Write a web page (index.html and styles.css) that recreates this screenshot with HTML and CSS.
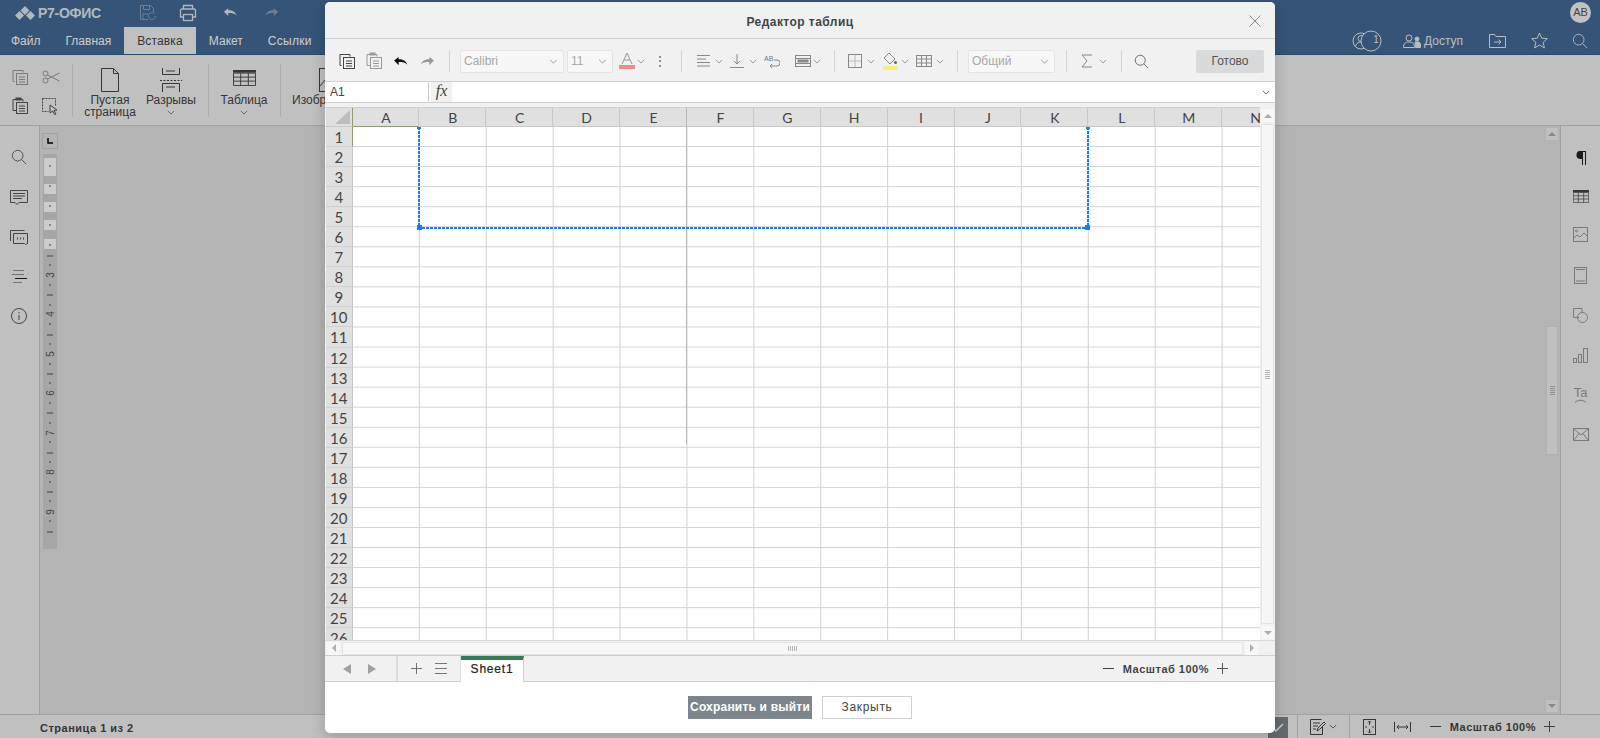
FILE: index.html
```html
<!DOCTYPE html>
<html lang="ru">
<head>
    <meta charset="UTF-8">
    <title>Редактор таблиц</title>
    <link rel="stylesheet" href="styles.css">
</head>
<body>
<svg class="defs" width="0" height="0">
    <symbol id="chev" viewBox="0 0 10 6"><path d="M1 1l4 4 4-4" fill="none" stroke="currentColor"/></symbol>
    <symbol id="search" viewBox="0 0 18 18"><circle cx="7.5" cy="7.5" r="6" fill="none" stroke="currentColor"/><path d="M12 12l5 5" stroke="currentColor" fill="none"/></symbol>
    <symbol id="copy" viewBox="0 0 18 18"><path d="M3.5 13.5h-1.500v-11h10v2" fill="none" stroke="currentColor"/><rect x="5.500" y="5.500" width="11" height="11" fill="none" stroke="currentColor"/><path d="M8 9h6M8 11.500h6M8 14h6" stroke="currentColor"/></symbol>
    <symbol id="paste" viewBox="0 0 18 18"><path d="M5 13.500h-3v-11h3M10 2.500h2v2" fill="none" stroke="currentColor"/><rect x="4.500" y="0.500" width="6" height="3" fill="currentColor"/><rect x="5.500" y="5.500" width="11" height="11" fill="none" stroke="currentColor"/><path d="M8 9h6M8 11.500h6M8 14h6" stroke="currentColor"/></symbol>
    <symbol id="undo" viewBox="0 0 16 12"><path d="M1 5l5-4v2.500c4.500 0 8 1.500 9.500 6-2-2.500-5-3-9.500-3V10z" fill="currentColor"/></symbol>
    <symbol id="redo" viewBox="0 0 16 12"><path d="M15 5l-5-4v2.500c-4.500 0-8 1.500-9.500 6 2-2.500 5-3 9.500-3V10z" fill="currentColor"/></symbol>
    <symbol id="plus" viewBox="0 0 12 12"><path d="M6 0v12M0 6h12" stroke="currentColor" fill="none"/></symbol>
    <symbol id="table" viewBox="0 0 24 18"><path d="M.500 3.500h23v14h-23zM.500 8h23M.500 12.500h23M8 3.500v14M16 3.500v14" fill="none" stroke="currentColor"/><rect width="24" height="3" fill="currentColor"/></symbol>
</svg>

<div class="app">
    <header class="title-row">
        <div class="logo">
            <svg width="22" height="14" viewBox="0 0 22 14"><path d="M11 0l4.500 4.500L11 9 6.500 4.500zM5.500 5l4.500 4.500L5.500 14 1 9.500zM16.500 5l4.500 4.500-4.500 4.500-4.500-4.500z" fill="currentColor"/></svg>
            <span>Р7-ОФИС</span>
        </div>
        <svg class="top-save" width="18" height="18" viewBox="0 0 18 18" fill="none" stroke="currentColor"><path d="M9 15.500H1.500v-14h10l3 3V8"/><path d="M4.500 1.500v4h6v-4M4 15v-5h5"/><path d="M16.500 12a3.500 3.500 0 1 1-1-2.400" /></svg>
        <svg class="top-print" width="18" height="18" viewBox="0 0 18 18"><path d="M4.500 5V1.500h9V5M4.500 13h-3V6.500a1.500 1.500 0 0 1 1.500-1.500h12a1.500 1.500 0 0 1 1.500 1.500V13h-3" fill="none" stroke="currentColor" stroke-width="1.300"/><rect x="4.500" y="10.500" width="9" height="6" fill="none" stroke="currentColor" stroke-width="1.300"/></svg>
        <svg class="top-undo" width="14" height="11"><use href="#undo"/></svg>
        <svg class="top-redo" width="14" height="11"><use href="#redo"/></svg>
        <div class="avatar">АВ</div>
    </header>

    <nav class="tab-row">
        <div class="tab first">Файл</div>
        <div class="tab">Главная</div>
        <div class="tab active">Вставка</div>
        <div class="tab">Макет</div>
        <div class="tab wide">Ссылки</div>
        <div class="tab-right">
            <div class="users">
                <svg width="30" height="22" viewBox="0 0 30 22" fill="none" stroke="currentColor"><circle cx="9" cy="11" r="8"/><circle cx="9" cy="8.500" r="3"/><path d="M3.500 16c1-3 3-4 5.500-4"/><circle cx="19" cy="11" r="10" fill="#446995"/></svg>
                <span class="users-count">1</span>
            </div>
            <svg class="share-icon" width="18" height="14" viewBox="0 0 18 14" fill="none" stroke="currentColor"><circle cx="6" cy="4" r="3"/><path d="M.500 13.500c0-4 2-5.500 5.500-5.500s5.500 1.500 5.500 5.500z"/><circle cx="14" cy="5" r="2" fill="currentColor"/><path d="M12 8h4l1.500 2v3.500h-5z" fill="currentColor"/></svg>
            <span class="share-label">Доступ</span>
            <svg class="folder-icon" width="17" height="14" viewBox="0 0 17 14" fill="none" stroke="currentColor"><path d="M.500 13V.500h5l1.500 2h9.500V13.500H.500z"/><path d="M5 8h7M9.500 5.500L12 8l-2.500 2.500"/></svg>
            <svg class="star-icon" width="17" height="17" viewBox="0 0 17 17" fill="none" stroke="currentColor"><path d="M8.500 1l2.200 5.200 5.600.5-4.200 3.700 1.300 5.500-4.900-2.900-4.900 2.900 1.300-5.500L.700 6.700l5.600-.5z"/></svg>
            <svg class="find-icon" width="16" height="16"><use href="#search"/></svg>
        </div>
    </nav>

    <section class="ribbon">
        <div class="small-tools">
            <svg width="18" height="18"><use href="#copy"/></svg>
            <svg width="18" height="14" viewBox="0 0 18 14" fill="none" stroke="currentColor"><circle cx="3.500" cy="3.500" r="2.500"/><circle cx="3.500" cy="10.500" r="2.500"/><path d="M5.500 5l12 6M5.500 9l12-6"/></svg>
            <svg width="18" height="18"><use href="#paste"/></svg>
            <svg width="17" height="17" viewBox="0 0 17 17" fill="none" stroke="currentColor"><path d="M.500.500h13v7M.500.500v13h6" stroke-dasharray="2 1"/><path d="M8 7l7 5-3 .5 2 3.500-1.500.5-2-3.500-2.500 2z"/></svg>
        </div>
        <div class="ribbon-sep s6"></div>
        <div class="big-tool w60 m7">
            <svg width="18" height="24" viewBox="0 0 18 24" fill="none" stroke="currentColor"><path d="M.500.500h12l5 5v18H.500zM12.500.500v5h5"/></svg>
            <div class="big-label">Пустая<br>страница</div>
        </div>
        <div class="big-tool w58 m2">
            <svg width="22" height="24" viewBox="0 0 22 24" fill="none" stroke="currentColor"><path d="M2.500 0v6.500h17V0M6 3h9"/><path d="M0 12.500h22" stroke-dasharray="2 1.500"/><path d="M2.500 24v-8.500h17V24M6 19h9"/></svg>
            <div class="big-label">Разрывы</div>
            <svg class="big-chev" width="8" height="5"><use href="#chev"/></svg>
        </div>
        <div class="ribbon-sep s8"></div>
        <div class="big-tool w56 m7">
            <svg class="ribbon-table" width="23" height="16" viewBox="0 0 24 18" preserveAspectRatio="none"><use href="#table"/></svg>
            <div class="big-label">Таблица</div>
            <svg class="big-chev" width="8" height="5"><use href="#chev"/></svg>
        </div>
        <div class="ribbon-sep s8"></div>
        <div class="big-tool m11">
            <svg width="22" height="24" viewBox="0 0 22 24" fill="none" stroke="currentColor"><rect x=".500" y=".500" width="21" height="23"/><path d="M1 18l6-7 5 5 3-3 6 6"/></svg>
            <div class="big-label">Изображение</div>
        </div>
    </section>

    <main class="workspace">
        <aside class="left-panel">
            <svg width="16" height="16"><use href="#search"/></svg>
            <svg width="18" height="16" viewBox="0 0 18 16" fill="none" stroke="currentColor"><path d="M.500.500h17v12H9l-2 2-2-2H.500z"/><path d="M3 3.500h12M3 6h12M3 8.500h9"/></svg>
            <svg width="18" height="16" viewBox="0 0 18 16" fill="none" stroke="currentColor"><path d="M.500 11V.500h14"/><path d="M3.500 3.500h14v10l-2 1-1-1H3.500z"/><path d="M7 8.500h1M10 8.500h1M13 8.500h1" stroke-width="2"/></svg>
            <svg width="16" height="14" viewBox="0 0 16 14" stroke="currentColor"><path d="M2 .500h11M1 4.500h12" opacity=".6"/><path d="M4 8.500h12" stroke="#222"/><path d="M2 12.500h9" opacity=".6"/></svg>
            <svg width="16" height="16" viewBox="0 0 16 16" fill="none" stroke="currentColor"><circle cx="8" cy="8" r="7.500"/><path d="M8 7v5M8 4v1.500"/></svg>
        </aside>
        <div class="doc-area">
            <div class="ruler-col">
                <div class="tab-stop"><svg width="6" height="6" viewBox="0 0 6 6"><path d="M1 0v5h5" fill="none" stroke="#000" stroke-width="1.500"/></svg></div>
                <svg class="ruler" width="16" height="395" viewBox="0 0 16 395">
                    <rect x="1" width="14" height="395" fill="#d0d0d0"/>
                    <path d="M2 4h12v18H2zM2 30h12v10H2zM2 48h12v10H2zM2 66h12v10H2zM2 85h12v10H2z" fill="#fff"/>
                    <path d="M7 12h2M7 32h2M7 52h2M7 71h2M7 91h2M7 111h2M7 131h2M7 151h2M7 170h2M7 190h2M7 210h2M7 229h2M7 249h2M7 269h2M7 288h2M7 308h2M7 328h2M7 347h2M7 367h2" stroke="#555" fill="none"/>
                    <path d="M5 102h6M5 141h6M5 181h6M5 220h6M5 259h6M5 299h6M5 338h6M5 378h6" stroke="#555" fill="none"/>
                    <g class="ruler-nums">
                        <text transform="translate(12 121) rotate(-90)">3</text>
                        <text transform="translate(12 160) rotate(-90)">4</text>
                        <text transform="translate(12 200) rotate(-90)">5</text>
                        <text transform="translate(12 239) rotate(-90)">6</text>
                        <text transform="translate(12 279) rotate(-90)">7</text>
                        <text transform="translate(12 318) rotate(-90)">8</text>
                        <text transform="translate(12 358) rotate(-90)">9</text>
                    </g>
                </svg>
            </div>
            <div class="doc-scroll">
                <div class="scroll-btn"><i class="tri up"></i></div>
                <div class="doc-thumb"><span class="grip-h"></span></div>
                <div class="scroll-btn last"><i class="tri down"></i></div>
            </div>
        </div>
        <aside class="right-panel">
            <svg width="12" height="14" viewBox="0 0 12 14"><path d="M6 0H11V14H10V1H8V14H7V8H5A4 4 0 0 1 6 0z" fill="#222"/></svg>
            <svg class="panel-dark" width="16" height="13" viewBox="0 0 24 18" preserveAspectRatio="none"><use href="#table"/></svg>
            <svg width="15" height="15" viewBox="0 0 15 15" fill="none" stroke="currentColor"><rect x=".500" y=".500" width="14" height="14"/><circle cx="3.500" cy="4" r="1"/><path d="M1 11l3-3 3 2 4-4 3 3"/></svg>
            <svg width="13" height="17" viewBox="0 0 13 17" fill="none" stroke="currentColor"><rect x=".500" y=".500" width="12" height="16"/><path d="M2 2.500h9M2 14h9"/></svg>
            <svg width="15" height="15" viewBox="0 0 15 15" fill="none" stroke="currentColor"><path d="M6 9.500H.500V.500H9V5"/><circle cx="9.500" cy="9.500" r="5"/></svg>
            <svg width="15" height="15" viewBox="0 0 15 15" fill="none" stroke="currentColor"><rect x=".500" y="10.500" width="3" height="4"/><rect x="5.500" y="6.500" width="3" height="8"/><rect x="10.500" y=".500" width="4" height="14"/></svg>
            <div class="panel-ta">
                <span>Ta</span>
                <svg width="11" height="4" viewBox="0 0 11 4"><path d="M0 3.500C3 .500 8 .500 11 3.500" fill="none" stroke="currentColor"/></svg>
            </div>
            <svg width="16" height="13" viewBox="0 0 16 13" fill="none" stroke="currentColor"><rect x=".500" y=".500" width="15" height="12"/><path d="M1 1l7 6 7-6M1 12l5-6.500M15 12l-5-6.500"/></svg>
        </aside>
    </main>

    <footer class="status-bar">
        <div class="page-count">Страница 1 из 2</div>
        <div class="status-right">
            <div class="review-box">
                <svg width="12" height="10" viewBox="0 0 12 10"><path d="M1 5l3 3 7-7" fill="none" stroke="#fff" stroke-width="1.500"/></svg>
            </div>
            <div class="status-sep s9"></div>
            <svg class="status-edit" width="16" height="16" viewBox="0 0 16 16" fill="none" stroke="currentColor"><path d="M12.500 8v7.500H.500V.500h11"/><path d="M3 4h7M3 7h5M3 10h3M7 12l1-3 6-6 1.500 1.500-6 6z"/></svg>
            <svg class="status-chev" width="8" height="5"><use href="#chev"/></svg>
            <div class="status-sep s12"></div>
            <svg class="status-fit" width="13" height="16" viewBox="0 0 13 16" fill="none" stroke="currentColor"><rect x=".500" y=".500" width="12" height="15"/><path d="M6.500 2v4M5 3.500L6.500 2 8 3.500M6.500 14v-4M5 12.500L6.500 14 8 12.500M2 8h2M9 8h2"/></svg>
            <svg class="status-width" width="17" height="10" viewBox="0 0 17 10" fill="none" stroke="currentColor"><path d="M.500 0v10M16.500 0v10M3 5h11M5 3L3 5l2 2M12 3l2 2-2 2"/></svg>
            <span class="zoom-minus"></span>
            <span class="zoom-label">Масштаб 100%</span>
            <svg class="zoom-plus" width="11" height="11"><use href="#plus"/></svg>
        </div>
    </footer>
</div>

<div class="overlay"></div>

<div class="modal">
    <div class="modal-title">
        <span>Редактор таблиц</span>
        <svg class="modal-close" width="12" height="12" viewBox="0 0 12 12"><path d="M.500.500l11 11M11.500.500l-11 11" stroke="#888" fill="none"/></svg>
    </div>

    <div class="sheet-tools">
        <span class="ic27"><svg width="18" height="18"><use href="#copy"/></svg></span>
        <span class="ic27 faded"><svg width="18" height="18"><use href="#paste"/></svg></span>
        <span class="ic27 black"><svg width="15" height="11"><use href="#undo"/></svg></span>
        <span class="ic27 faded"><svg width="15" height="11"><use href="#redo"/></svg></span>
        <div class="tool-sep m8"></div>
        <div class="combo font-combo m10"><span>Calibri</span><svg width="9" height="5"><use href="#chev"/></svg></div>
        <div class="combo size-combo m3"><span>11</span><svg width="9" height="5"><use href="#chev"/></svg></div>
        <span class="ic m5"><svg class="tool-a" width="16" height="18" viewBox="0 0 16 18"><path d="M3 12L8 1l5 11M5 8h6" fill="none" stroke="#999"/><rect x="0" y="13" width="16" height="4" fill="#f08a8a"/></svg></span>
        <span class="ch"><svg width="8" height="5"><use href="#chev"/></svg></span>
        <span class="ch m9 dots">⋮</span>
        <div class="tool-sep m16"></div>

        <span class="ic m13"><svg width="14" height="12" viewBox="0 0 14 12"><path d="M0 .500h13M0 4h9M0 7.500h13M0 11h13" stroke="#888"/></svg></span>
        <span class="ch m1"><svg width="8" height="5"><use href="#chev"/></svg></span>
        <span class="ic m4"><svg width="14" height="14" viewBox="0 0 14 14" fill="none" stroke="#888"><path d="M7 0v10M4 7l3 3 3-3M0 13.500h14"/></svg></span>
        <span class="ch m2"><svg width="8" height="5"><use href="#chev"/></svg></span>
        <span class="ic m5"><svg width="16" height="13" viewBox="0 0 16 13"><text class="wrap-ab" x="0" y="6">AB</text><path d="M10 5h3a2.500 2.500 0 0 1 0 6H6M8 9l-2 2 2 2" fill="none" stroke="#888"/></svg></span>
        <span class="ic m13"><svg width="16" height="12" viewBox="0 0 16 12" fill="none" stroke="#888"><rect x=".500" y=".500" width="15" height="11"/><path d="M1 3.500h14M1 8.500h14"/><rect x="3" y="5" width="10" height="2" fill="#888"/></svg></span>
        <span class="ch"><svg width="8" height="5"><use href="#chev"/></svg></span>
        <div class="tool-sep m12"></div>

        <span class="ic m11"><svg width="14" height="14" viewBox="0 0 14 14" fill="none" stroke="#888"><rect x=".500" y=".500" width="13" height="13"/><path d="M7 1v12M1 7h12" stroke="#bbb"/></svg></span>
        <span class="ch m2"><svg width="8" height="5"><use href="#chev"/></svg></span>
        <span class="ic m5"><svg width="15" height="18" viewBox="0 0 15 18"><path d="M6 1l6 6-5 5-6-6z" fill="none" stroke="#888"/><circle cx="12.500" cy="10.500" r="1.500" fill="#666"/><rect y="14" width="15" height="4" fill="#f4f07a"/></svg></span>
        <span class="ch m1"><svg width="8" height="5"><use href="#chev"/></svg></span>
        <span class="ic m5"><svg width="16" height="12" viewBox="0 0 16 12" fill="none" stroke="#888"><rect x=".500" y=".500" width="15" height="11"/><path d="M1 4h14M1 8h14M5.500 1v10M10.500 1v10"/></svg></span>
        <span class="ch m2"><svg width="8" height="5"><use href="#chev"/></svg></span>
        <div class="tool-sep m12"></div>

        <div class="combo format-combo m10"><span>Общий</span><svg width="9" height="5"><use href="#chev"/></svg></div>
        <div class="tool-sep m11"></div>

        <span class="ic m11"><svg width="12" height="14" viewBox="0 0 12 14"><path d="M11 1H1l5 6-5 6h10" fill="none" stroke="#888"/></svg></span>
        <span class="ch m2"><svg width="8" height="5"><use href="#chev"/></svg></span>
        <div class="tool-sep m13"></div>
        <span class="ic m10 ic-dark"><svg width="15" height="15"><use href="#search"/></svg></span>
        <div class="done-btn">Готово</div>
    </div>

    <div class="formula-bar">
        <div class="name-box">A1</div>
        <div class="fx-box">fx</div>
        <div class="formula-input"><svg width="8" height="5"><use href="#chev"/></svg></div>
    </div>
    <div class="bar-gap"></div>

    <div class="sheet-view">
        <div class="sheet-main">
            <div class="col-head">
                <div class="corner"><svg width="15" height="14"><path d="M15 0v14H0z" fill="#bdbdbd"/></svg></div>
                <div class="col active">A</div><div class="col">B</div><div class="col">C</div><div class="col">D</div><div class="col">E</div><div class="col">F</div><div class="col">G</div><div class="col">H</div><div class="col">I</div><div class="col">J</div><div class="col">K</div><div class="col">L</div><div class="col">M</div><div class="col">N</div>
            </div>
            <div class="sheet-rows">
                <div class="row-head">
                    <div class="rn active">1</div><div class="rn">2</div><div class="rn">3</div><div class="rn">4</div><div class="rn">5</div><div class="rn">6</div><div class="rn">7</div><div class="rn">8</div><div class="rn">9</div><div class="rn">10</div><div class="rn">11</div><div class="rn">12</div><div class="rn">13</div>
                    <div class="rn">14</div><div class="rn">15</div><div class="rn">16</div><div class="rn">17</div><div class="rn">18</div><div class="rn">19</div><div class="rn">20</div><div class="rn">21</div><div class="rn">22</div><div class="rn">23</div><div class="rn">24</div><div class="rn">25</div><div class="rn">26</div>
                </div>
                <div class="cells"></div>
            </div>
            <div class="freeze-line"></div>
            <div class="selection">
                <i class="sel-cap left"></i><i class="sel-cap right"></i>
                <i class="sel-dot left"></i><i class="sel-dot right"></i>
            </div>
        </div>
        <div class="v-scroll">
            <div class="sheet-btn"><i class="tri up"></i></div>
            <div class="v-thumb"><span class="grip-h"></span></div>
            <div class="sheet-btn"><i class="tri down"></i></div>
        </div>
    </div>

    <div class="h-scroll">
        <div class="sheet-btn"><i class="tri left"></i></div>
        <div class="h-thumb"><span class="grip-v"></span></div>
        <div class="sheet-btn"><i class="tri right"></i></div>
    </div>

    <div class="sheet-tabs">
        <div class="tab-nav">
            <i class="nav-tri back"></i>
            <i class="nav-tri fwd"></i>
        </div>
        <div class="tab-add">
            <svg width="11" height="11"><use href="#plus"/></svg>
            <svg width="12" height="11" viewBox="0 0 12 11"><path d="M0 .500h12M0 5.500h12M0 10.500h12" stroke="#777"/></svg>
        </div>
        <div class="sheet-tab">Sheet1</div>
        <div class="sheet-zoom">
            <span class="zoom-minus"></span>
            <span class="zoom-label">Масштаб 100%</span>
            <svg class="zoom-plus" width="11" height="11"><use href="#plus"/></svg>
        </div>
    </div>

    <div class="modal-foot">
        <div class="save-btn">Сохранить и выйти</div>
        <div class="close-btn">Закрыть</div>
    </div>
</div>
</body>
</html>
```

FILE: styles.css
```css
html, body {
    margin: 0;
    height: 100%;
    overflow: hidden;
}

body {
    font-family: "Liberation Sans", Arial, sans-serif;
    font-size: 12px;
    color: #444;
    position: relative;
}

svg {
    display: block;
    flex: none;
}

.defs {
    position: absolute;
}

.app {
    height: 738px;
    display: flex;
    flex-direction: column;
    background-color: #f1f1f1;
}

/* Top blue header */
.title-row {
    height: 27px;
    box-sizing: border-box;
    padding-bottom: 2px;
    display: flex;
    align-items: center;
    background-color: #446995;
    color: #dfe6ee;
}

.logo {
    display: flex;
    align-items: center;
    gap: 2px;
    margin-left: 14px;
    width: 86px;
    font-size: 14px;
    font-weight: bold;
    letter-spacing: -0.3px;
    white-space: nowrap;
}

.top-save {
    margin-left: 39px;
    opacity: 0.45;
}

.top-print {
    margin-left: 22px;
}

.top-undo {
    margin-left: 26px;
}

.top-redo {
    margin-left: 28px;
    opacity: 0.45;
}

.avatar {
    margin-left: auto;
    margin-right: 9px;
    width: 21px;
    height: 21px;
    border-radius: 50%;
    background-color: #f3f3f3;
    color: #555;
    font-size: 11px;
    line-height: 21px;
    text-align: center;
}

.tab-row {
    height: 28px;
    box-sizing: border-box;
    display: flex;
    background-color: #446995;
    color: #fff;
    border-bottom: 1px solid #2e5a8c;
}

.tab {
    height: 27px;
    line-height: 29px;
    padding: 0 12.5px;
    box-sizing: border-box;
}

.tab.first {
    padding-left: 11px;
}

.tab.active {
    background-color: #f1f1f1;
    color: #444;
    padding: 0 13.5px;
    letter-spacing: 0.15px;
}

.tab.wide {
    letter-spacing: 0.3px;
}

.tab-right {
    margin-left: auto;
    display: flex;
    align-items: center;
    color: #e6ebf1;
}

.users {
    position: relative;
    margin-right: 21px;
}

.users-count {
    position: absolute;
    left: 18px;
    top: 4px;
    width: 12px;
    text-align: center;
    font-size: 10px;
}

.share-label {
    margin-left: 3px;
    width: 42px;
}

.folder-icon {
    margin-left: 23px;
}

.star-icon {
    margin-left: 25px;
}

.find-icon {
    margin-left: 24px;
    margin-right: 12px;
}

/* Ribbon */
.ribbon {
    height: 71px;
    box-sizing: border-box;
    display: flex;
    align-items: flex-start;
    padding-top: 9px;
    border-bottom: 1px solid #cbcbcb;
    overflow: hidden;
}

.small-tools {
    width: 62px;
    margin-left: 4px;
    display: grid;
    grid-template-columns: 31px 31px;
    grid-auto-rows: 26px;
    row-gap: 3px;
    justify-items: center;
    align-items: center;
    color: #999;
}

.small-tools svg:nth-child(3),
.small-tools svg:nth-child(4) {
    color: #555;
}

.ribbon-sep {
    width: 1px;
    height: 53px;
    background-color: #d8d8d8;
    flex: none;
}

.s6 {
    margin-left: 6px;
}

.s8 {
    margin-left: 8px;
}

.big-tool {
    display: flex;
    flex-direction: column;
    align-items: center;
    flex: none;
}

.big-tool > svg:first-child {
    margin-top: 4px;
    margin-bottom: 2px;
}

.big-tool > svg.ribbon-table {
    margin-top: 6px;
    margin-bottom: 8px;
}

.big-label {
    line-height: 12px;
    text-align: center;
}

.big-chev {
    margin-top: 4px;
    color: #666;
}

.w60 { width: 60px; }
.w58 { width: 58px; }
.w56 { width: 56px; }

.m1 { margin-left: 1px; }
.m2 { margin-left: 2px; }
.m3 { margin-left: 3px; }
.m4 { margin-left: 4px; }
.m5 { margin-left: 5px; }
.m7 { margin-left: 7px; }
.m8 { margin-left: 8px; }
.m9 { margin-left: 9px; }
.m10 { margin-left: 10px; }
.m11 { margin-left: 11px; }
.m12 { margin-left: 12px; }
.m13 { margin-left: 13px; }
.m16 { margin-left: 16px; }

/* Document area */
.workspace {
    flex: 1;
    display: flex;
    min-height: 0;
}

.left-panel {
    width: 40px;
    box-sizing: border-box;
    border-right: 1px solid #cbcbcb;
    padding-top: 23px;
    display: flex;
    flex-direction: column;
    align-items: center;
    flex: none;
    padding-right: 2px;
    color: #555;
}

.left-panel svg {
    margin-bottom: 24px;
}

.left-panel svg:nth-child(1) {
    margin-bottom: 25px;
}

.doc-area {
    flex: 1;
    display: flex;
    justify-content: space-between;
    background-color: #e2e2e2;
}

.ruler-col {
    padding: 7px 0 0 2px;
}

.tab-stop {
    width: 14px;
    height: 14px;
    border: 1px solid #cbcbcb;
    display: flex;
    align-items: center;
    justify-content: center;
    margin-bottom: 5px;
}

.ruler-nums text {
    font-family: "Liberation Sans", Arial, sans-serif;
    font-size: 10px;
    fill: #555;
    text-anchor: middle;
}

.doc-scroll {
    width: 12px;
    margin-right: 2px;
    padding: 2px 0;
    display: flex;
    flex-direction: column;
}

.scroll-btn {
    height: 12px;
    background-color: #f1f1f1;
    display: flex;
    align-items: center;
    justify-content: center;
    flex: none;
}

.scroll-btn.last {
    margin-top: auto;
}

.doc-thumb {
    height: 129px;
    margin-top: 186px;
    box-sizing: border-box;
    background-color: #f1f1f1;
    border: 1px solid #dcdcdc;
    display: flex;
    align-items: center;
    justify-content: center;
}

.tri {
    display: block;
    width: 0;
    height: 0;
    border: 4px solid transparent;
}

.tri.up {
    border-top: 0;
    border-bottom-color: #adadad;
}

.tri.down {
    border-bottom: 0;
    border-top-color: #adadad;
}

.tri.left {
    border-left: 0;
    border-right-color: #adadad;
}

.tri.right {
    border-right: 0;
    border-left-color: #adadad;
}

.grip-h {
    width: 5px;
    height: 9px;
    background: repeating-linear-gradient(to bottom, #b5b5b5 0, #b5b5b5 1px, transparent 1px, transparent 2px);
}

.grip-v {
    width: 9px;
    height: 5px;
    background: repeating-linear-gradient(to right, #b5b5b5 0, #b5b5b5 1px, transparent 1px, transparent 2px);
}

.right-panel {
    width: 40px;
    box-sizing: border-box;
    border-left: 1px solid #cbcbcb;
    padding-top: 25px;
    display: flex;
    flex-direction: column;
    align-items: center;
    flex: none;
    gap: 24.500px;
    color: #999;
}

.panel-dark {
    color: #444;
}

.panel-ta {
    display: flex;
    flex-direction: column;
    align-items: center;
    font-size: 13px;
    line-height: 12px;
    height: 16px;
    color: #999;
}

/* Status bar */
.status-bar {
    height: 24px;
    box-sizing: border-box;
    border-top: 1px solid #cbcbcb;
    display: flex;
    align-items: flex-start;
    flex: none;
}

.page-count {
    margin-left: 40px;
    margin-top: 7px;
    font-size: 11px;
    font-weight: bold;
    letter-spacing: 0.5px;
    color: #444;
}

.status-right {
    margin-left: auto;
    display: flex;
    align-items: center;
    height: 23px;
}

.review-box {
    width: 20px;
    height: 21px;
    margin-top: 2px;
    background-color: #7d858c;
    display: flex;
    align-items: center;
    justify-content: center;
}

.status-sep {
    width: 1px;
    height: 23px;
    background-color: #cbcbcb;
}

.s9 { margin-left: 9px; }
.s12 { margin-left: 12px; }

.status-edit {
    margin-left: 12px;
}

.status-chev {
    margin-left: 3px;
}

.status-fit {
    margin-left: 13px;
}

.status-width {
    margin-left: 18px;
}

.status-right .zoom-minus {
    margin-left: 19px;
}

.status-right .zoom-plus {
    margin-right: 45px;
}

.zoom-minus {
    width: 11px;
    height: 1px;
    background-color: #444;
}

.zoom-label {
    margin-left: 9px;
    margin-right: 8px;
    font-size: 11px;
    font-weight: bold;
    letter-spacing: 0.5px;
    white-space: nowrap;
}

.overlay {
    position: absolute;
    inset: 0;
    background-color: rgba(0, 0, 0, 0.2);
}

/* Modal with spreadsheet */
.modal {
    position: absolute;
    left: 325px;
    top: 2px;
    width: 950px;
    height: 731px;
    border-radius: 5px;
    overflow: hidden;
    background-color: #fff;
    box-shadow: 0 5px 15px rgba(0, 0, 0, 0.2);
    display: flex;
    flex-direction: column;
}

.modal-title {
    height: 37px;
    box-sizing: border-box;
    flex: none;
    padding-top: 4px;
    background-color: #f1f1f1;
    border-bottom: 1px solid #cfcfcf;
    display: flex;
    align-items: center;
    justify-content: center;
    position: relative;
    font-weight: bold;
    letter-spacing: 0.45px;
    color: #444;
}

.modal-close {
    position: absolute;
    right: 14px;
    top: 13px;
}

.sheet-tools {
    height: 43px;
    box-sizing: border-box;
    flex: none;
    background-color: #f1f1f1;
    border-bottom: 1px solid #cfcfcf;
    padding-left: 8px;
    padding-top: 2px;
    display: flex;
    align-items: center;
    color: #777;
}

.sheet-tools svg {
    color: #888;
}

.ic27 {
    width: 27px;
    display: flex;
    justify-content: center;
    flex: none;
}

.ic27 svg {
    color: #444;
}

.ic27.faded svg {
    color: #999;
}

.ic27.black svg {
    color: #111;
}

.ic {
    width: 18px;
    display: flex;
    justify-content: center;
    flex: none;
}

.ic.ic-dark svg {
    color: #555;
}

.ch {
    width: 10px;
    display: flex;
    justify-content: center;
    flex: none;
}

.dots {
    color: #777;
    font-size: 14px;
    line-height: 14px;
}

.tool-sep {
    width: 1px;
    height: 22px;
    background-color: #d4d4d4;
    flex: none;
}

.combo {
    height: 23px;
    box-sizing: border-box;
    background-color: #f7f7f7;
    border: 1px solid #e4e4e4;
    border-radius: 2px;
    padding: 0 5px 0 3px;
    display: flex;
    align-items: center;
    justify-content: space-between;
    color: #a8a8a8;
    flex: none;
}

.font-combo { width: 104px; }
.size-combo { width: 46px; }
.format-combo { width: 87px; }

.wrap-ab {
    font-family: "Liberation Sans", Arial, sans-serif;
    font-size: 7px;
    fill: #777;
}

.done-btn {
    margin-left: auto;
    margin-right: 11px;
    width: 68px;
    height: 23px;
    line-height: 23px;
    text-align: center;
    background-color: #d8dadc;
    border-radius: 2px;
    color: #555;
}

.formula-bar {
    height: 21px;
    box-sizing: border-box;
    flex: none;
    display: flex;
    border-bottom: 1px solid #cfcfcf;
}

.name-box {
    width: 104px;
    box-sizing: border-box;
    padding-left: 5px;
    line-height: 20px;
    color: #444;
    border-right: 1px solid #cfcfcf;
}

.fx-box {
    width: 21px;
    margin-left: 2px;
    background-color: #f1f1f1;
    font-family: "Liberation Serif", serif;
    font-style: italic;
    font-size: 16px;
    line-height: 18px;
    text-align: center;
}

.formula-input {
    flex: 1;
    display: flex;
    align-items: center;
    justify-content: flex-end;
    padding-right: 5px;
}

.bar-gap {
    height: 4px;
    flex: none;
    background-color: #f1f1f1;
}

.sheet-view {
    height: 533px;
    flex: none;
    display: flex;
    background-color: #f1f1f1;
}

.sheet-main {
    position: relative;
    flex: 1;
    min-width: 0;
    overflow: hidden;
    background-color: #fff;
}

.col-head {
    height: 20px;
    box-sizing: border-box;
    display: flex;
    background-color: #e0e0e0;
    border-top: 1px solid #d0d0d0;
    font-family: Lato, sans-serif;
    font-size: 14px;
    color: #444;
}

.corner {
    width: 27.5px;
    box-sizing: border-box;
    flex: none;
    display: flex;
    align-items: flex-end;
    justify-content: flex-end;
    padding: 0 2px 2px 0;
    border-left: 1px solid #f1f1f1;
    border-right: 1px solid #8f9a75;
    border-bottom: 1px solid #c8c8c8;
}

.col {
    width: 66.9px;
    box-sizing: border-box;
    flex: none;
    padding-left: 1px;
    text-align: center;
    line-height: 19px;
    border-right: 1px solid #c8c8c8;
    border-bottom: 1px solid #c8c8c8;
}

.col.active {
    border-bottom-color: #8f9a75;
}

.sheet-rows {
    display: flex;
    height: 513px;
}

.row-head {
    width: 27.5px;
    flex: none;
    box-sizing: border-box;
    border-left: 1px solid #f1f1f1;
    background-color: #e0e0e0;
    font-family: Lato, sans-serif;
    font-size: 15px;
    color: #444;
}

.rn {
    height: 20.05px;
    box-sizing: border-box;
    line-height: 20px;
    text-align: center;
    border-right: 1px solid #c8c8c8;
    border-bottom: 1px solid #d0d0d0;
}

.rn.active {
    border-right-color: #8f9a75;
}

.cells {
    flex: 1;
    background-image:
        linear-gradient(to left, #d2d2d2 1px, transparent 1px),
        linear-gradient(to top, #d2d2d2 1px, transparent 1px);
    background-size: 66.9px 100%, 100% 20.05px;
}

.freeze-line {
    position: absolute;
    left: 361px;
    top: 0;
    width: 1px;
    height: 337px;
    background-color: #b8b8b8;
}

/* dashed range: 3px dash, 1px gap, top edge stays open */
.selection {
    position: absolute;
    left: 93px;
    top: 20px;
    width: 671px;
    height: 102px;
    background:
        repeating-linear-gradient(to bottom, #1a7cf5 0, #1a7cf5 3px, transparent 3px, transparent 4px) left top / 2px 100% no-repeat,
        repeating-linear-gradient(to bottom, #1a7cf5 0, #1a7cf5 3px, transparent 3px, transparent 4px) right top / 2px 100% no-repeat,
        repeating-linear-gradient(to right, #1a7cf5 0, #1a7cf5 3px, transparent 3px, transparent 4px) left bottom / 100% 2px no-repeat;
}

.sel-cap,
.sel-dot {
    position: absolute;
    background-color: #1a7cf5;
}

.sel-cap {
    top: 0;
    width: 4px;
    height: 2px;
}

.sel-cap.left { left: -1px; }
.sel-cap.right { right: -1px; }

.sel-dot {
    bottom: -1px;
    width: 5px;
    height: 5px;
}

.sel-dot.left { left: -1px; }
.sel-dot.right { right: -1px; }

.v-scroll {
    width: 15px;
    flex: none;
    display: flex;
    flex-direction: column;
    gap: 2px;
    padding: 2px 1px 1px 1px;
    box-sizing: border-box;
}

.sheet-btn {
    width: 13px;
    height: 13px;
    flex: none;
    background-color: #f7f7f7;
    border: 0;
    display: flex;
    align-items: center;
    justify-content: center;
}

.v-thumb {
    flex: 1;
    background-color: #f7f7f7;
    border: 1px solid #e4e4e4;
    display: flex;
    align-items: center;
    justify-content: center;
}

.h-scroll {
    height: 15px;
    box-sizing: border-box;
    flex: none;
    display: flex;
    gap: 2px;
    align-items: center;
    padding: 0 17px 0 2px;
    background-color: #f1f1f1;
    border-top: 1px solid #d8d8d8;
}

.h-thumb {
    flex: 1;
    height: 13px;
    box-sizing: border-box;
    background-color: #f7f7f7;
    border: 1px solid #e4e4e4;
    display: flex;
    align-items: center;
    justify-content: center;
}

.sheet-tabs {
    height: 27px;
    box-sizing: border-box;
    flex: none;
    display: flex;
    background-color: #f1f1f1;
    border-top: 1px solid #d0d0d0;
    border-bottom: 1px solid #d0d0d0;
}

.tab-nav {
    width: 73px;
    box-sizing: border-box;
    border-right: 2px solid #dcdcdc;
    display: flex;
    align-items: center;
    padding-left: 18px;
    gap: 17px;
}

.nav-tri {
    width: 0;
    height: 0;
    border: 5px solid transparent;
}

.nav-tri.back {
    border-left: 0;
    border-right: 8px solid #a0a0a0;
}

.nav-tri.fwd {
    border-right: 0;
    border-left: 8px solid #a0a0a0;
}

.tab-add {
    width: 63px;
    box-sizing: border-box;
    border-right: 1px solid #dcdcdc;
    display: flex;
    align-items: center;
    padding-left: 13px;
    gap: 13px;
    color: #666;
}

.sheet-tab {
    width: 63px;
    box-sizing: border-box;
    background-color: #fff;
    border-top: 4px solid #3b7a57;
    border-right: 1px solid #d0d0d0;
    margin-bottom: -1px;
    line-height: 19px;
    text-align: center;
    letter-spacing: 0.8px;
    color: #222;
    -webkit-text-stroke: 0.2px #222;
}

.sheet-zoom {
    margin-left: auto;
    margin-right: 47px;
    display: flex;
    align-items: center;
    color: #444;
}

.modal-foot {
    flex: 1;
    display: flex;
    align-items: flex-start;
    justify-content: center;
    gap: 10px;
    padding-top: 14px;
}

.save-btn {
    width: 124px;
    height: 23px;
    line-height: 23px;
    text-align: center;
    background-color: #7d858c;
    color: #fff;
    font-weight: bold;
    letter-spacing: 0.2px;
    white-space: nowrap;
}

.close-btn {
    width: 90px;
    height: 23px;
    box-sizing: border-box;
    line-height: 21px;
    text-align: center;
    border: 1px solid #cfcfcf;
    color: #444;
    letter-spacing: 0.7px;
}
```
